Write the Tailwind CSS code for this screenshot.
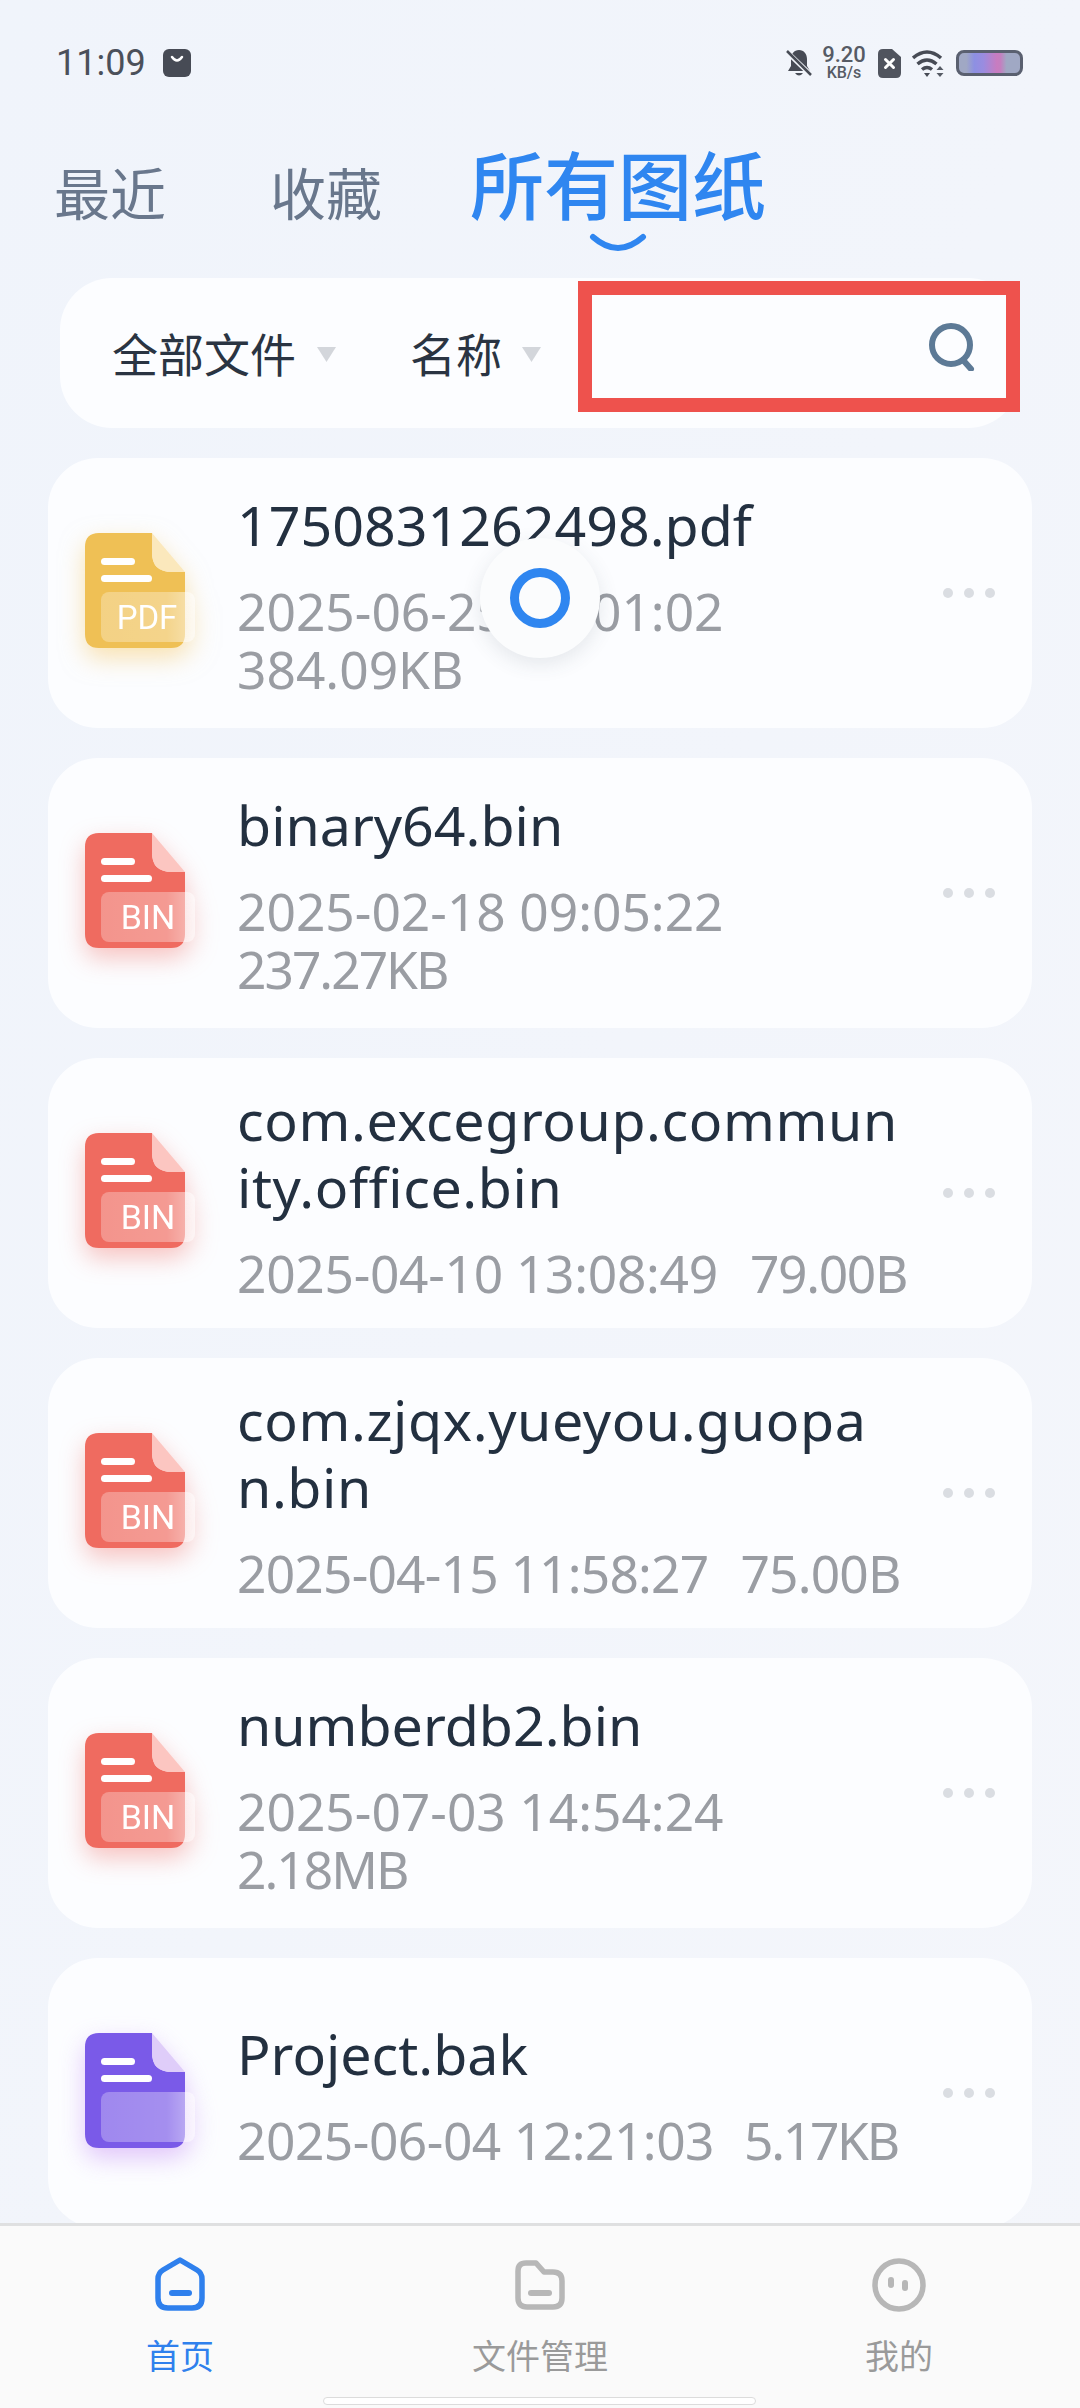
<!DOCTYPE html>
<html lang="zh-CN">
  <head>
    <meta charset="UTF-8" />
    <meta name="viewport" content="width=device-width, initial-scale=1.0" />
    <title>所有图纸</title>
    <script src="https://cdn.jsdelivr.net/npm/@tailwindcss/browser@4"></script>
  </head>
  <body>
    <div class="relative flex flex-col w-[1080px] h-[2408px] overflow-hidden bg-gradient-to-br from-[#f0f4fb] to-[#f4f6fb] font-['Noto_Sans','Noto_Sans_CJK_SC',sans-serif]">
      <!-- status bar -->
      <div class="flex items-center justify-between h-[126px] shrink-0 pl-[56px] pr-[57px]">
        <div class="flex items-center gap-[17px]">
          <span class="font-['Roboto'] text-[36px] leading-none text-[#4b505a]">11:09</span>
          <svg class="w-[28px] h-[28px]" viewBox="0 0 28 28">
            <rect width="28" height="28" rx="6" fill="#474b55" />
            <path d="M9 8q5 7 10 0" fill="none" stroke="#fff" stroke-width="2.5" stroke-linecap="round" />
          </svg>
        </div>
        <div class="flex items-center">
          <svg class="w-[26px] h-[28px]" viewBox="0 0 26 28">
            <path d="M13 1c5 0 8 4 8 9v7l3 5H2l3-5v-7c0-5 3-9 8-9zM9 24h8q-4 5-8 0z" fill="#474b55" />
            <path d="M1 3l24 23" stroke="#f2f5fb" stroke-width="5" />
            <path d="M1 2l24 24" stroke="#474b55" stroke-width="2.5" />
          </svg>
          <div class="flex flex-col items-center w-[46px] ml-[9px] mr-[11px] text-[#565b65] font-['Roboto'] font-medium">
            <span class="text-[22px] leading-[20px]">9.20</span>
            <span class="text-[16px] leading-[16px]">KB/s</span>
          </div>
          <svg class="w-[23px] h-[29px]" viewBox="0 0 23 29">
            <path d="M5 0h9l9 8v16q0 5-5 5H5q-5 0-5-5V5q0-5 5-5z" fill="#50545e" />
            <path d="M7.5 10.5l8 8M15.5 10.5l-8 8" stroke="#fff" stroke-width="3" stroke-linecap="round" />
          </svg>
          <svg class="w-[34px] h-[28px] ml-[11px]" viewBox="0 0 34 28">
            <path d="M1 9q14-12 28 0M5.500 15q9.500-8 19 0M10 20.500q5-4 10 0" fill="none" stroke="#474b55" stroke-width="3.500" />
            <path d="M12 24h6l-3 4z" fill="#474b55" />
            <path d="M28 17l3.500 4h-7zM28 28l3.500-4h-7z" fill="#565b65" />
          </svg>
          <div class="w-[67px] h-[26px] ml-[10px] rounded-[8px] border-[3px] border-[#5a6070] bg-[linear-gradient(90deg,#a0a8c4_0%,#a0a8c4_12%,#8d90e2_25%,#9a8ce0_40%,#c87cc0_62%,#c47fc0_68%,#a0a8c4_78%)]"></div>
        </div>
      </div>

      <!-- tabs -->
      <div class="flex items-start h-[152px] shrink-0 pl-[54px]">
        <span class="mt-[35px] w-[216px] text-[56px] leading-[64px] text-[#69778c]">最近</span>
        <span class="mt-[35px] w-[200px] text-[56px] leading-[64px] text-[#69778c]">收藏</span>
        <div class="flex flex-col items-center">
          <span class="mt-[18px] text-[74px] leading-[84px] font-medium text-[#2f86f0]">所有图纸</span>
          <svg class="w-[58px] h-[20px] mt-[5px]" viewBox="0 0 58 20">
            <path d="M4 4q25 22 50 0" fill="none" stroke="#2f86f0" stroke-width="6" stroke-linecap="round" />
          </svg>
        </div>
      </div>

      <!-- filter bar -->
      <div class="flex items-start h-[150px] shrink-0 ml-[60px] w-[960px] pl-[52px] rounded-[52px] bg-[#fcfdff]">
        <div class="flex items-center h-[110px] mt-[21px]">
          <span class="text-[46px] leading-none text-[#2a3442]">全部文件</span>
          <svg class="w-[19px] h-[15px] ml-[21px]" viewBox="0 0 19 15"><path d="M0 0h19l-9.500 15z" fill="#d3d6db" /></svg>
          <span class="ml-[74px] text-[46px] leading-none text-[#2a3442]">名称</span>
          <svg class="w-[19px] h-[15px] ml-[20px]" viewBox="0 0 19 15"><path d="M0 0h19l-9.500 15z" fill="#d3d6db" /></svg>
        </div>
        <div class="flex items-center justify-end ml-auto mt-[3px] w-[442px] h-[131px] pr-[30px] border-[14px] border-[#ee524d]">
          <svg class="w-[48px] h-[48px]" viewBox="0 0 48 48">
            <circle cx="23" cy="22" r="19" fill="none" stroke="#5d7a96" stroke-width="6" />
            <path d="M35 37l8 9" stroke="#5d7a96" stroke-width="6" stroke-linecap="round" />
          </svg>
        </div>
      </div>

      <!-- file list -->
      <main class="flex-1 min-h-0 overflow-hidden flex flex-col gap-[30px] pt-[30px] px-[48px]">
        <div class="flex items-center h-[270px] shrink-0 rounded-[50px] bg-[#fcfdff]">
          <svg class="w-[110px] h-[120px] ml-[37px] shrink-0 overflow-visible drop-shadow-[0_10px_12px_rgba(245,200,100,0.5)]" viewBox="0 0 110 120">
            <defs>
              <linearGradient id="glass" x1="0" x2="1" y1="0" y2="0">
                <stop offset="0" stop-color="#fff" stop-opacity="0.28" />
                <stop offset="0.7" stop-color="#fff" stop-opacity="0.32" />
                <stop offset="1" stop-color="#fff" stop-opacity="0.55" />
              </linearGradient>
            </defs>
            <path d="M14 0H67V20Q67 39 87 39H100V101Q100 115 86 115H14Q0 115 0 101V14Q0 0 14 0Z" fill="#efc055" />
            <path d="M67 0L100 39H87Q67 39 67 20Z" fill="#fbe8bc" />
            <rect x="16" y="25" width="34" height="7" rx="3.500" fill="#fff" />
            <rect x="16" y="42" width="51" height="7" rx="3.500" fill="#fff" />
            <rect x="16" y="59" width="94" height="50" rx="8" fill="url(#glass)" />
            <text x="62" y="96" text-anchor="middle" font-size="33" font-family="Roboto" fill="#fff">PDF</text>
          </svg>
          <div class="ml-[42px] pt-[2px] w-[663px]">
            <p class="text-[55.5px] leading-[67px] text-[#233040] break-all">1750831262498.pdf</p>
            <p class="mt-[24px] text-[51.5px] leading-[58px] text-[#9a9da3] whitespace-nowrap">2025-06-25 14:01:02<br />384.09KB</p>
          </div>
          <div class="flex gap-[11px] ml-auto mr-[37px]">
            <span class="w-[10px] h-[10px] rounded-full bg-[#dadde2]"></span>
            <span class="w-[10px] h-[10px] rounded-full bg-[#dadde2]"></span>
            <span class="w-[10px] h-[10px] rounded-full bg-[#dadde2]"></span>
          </div>
        </div>

        <div class="flex items-center h-[270px] shrink-0 rounded-[50px] bg-[#fcfdff]">
          <svg class="w-[110px] h-[120px] ml-[37px] shrink-0 overflow-visible drop-shadow-[0_10px_12px_rgba(240,110,100,0.4)]" viewBox="0 0 110 120">
            <path d="M14 0H67V20Q67 39 87 39H100V101Q100 115 86 115H14Q0 115 0 101V14Q0 0 14 0Z" fill="#ef6b60" />
            <path d="M67 0L100 39H87Q67 39 67 20Z" fill="#fcc6c1" />
            <rect x="16" y="25" width="34" height="7" rx="3.500" fill="#fff" />
            <rect x="16" y="42" width="51" height="7" rx="3.500" fill="#fff" />
            <rect x="16" y="59" width="94" height="50" rx="8" fill="url(#glass)" />
            <text x="63" y="96" text-anchor="middle" font-size="34" font-family="Roboto" fill="#fff">BIN</text>
          </svg>
          <div class="ml-[42px] pt-[2px] w-[663px]">
            <p class="text-[55.5px] leading-[67px] text-[#233040] break-all">binary64.bin</p>
            <p class="mt-[24px] text-[51.5px] leading-[58px] text-[#9a9da3] whitespace-nowrap">2025-02-18 09:05:22<br /><span class="tracking-[-2px]">237.27KB</span></p>
          </div>
          <div class="flex gap-[11px] ml-auto mr-[37px]">
            <span class="w-[10px] h-[10px] rounded-full bg-[#dadde2]"></span>
            <span class="w-[10px] h-[10px] rounded-full bg-[#dadde2]"></span>
            <span class="w-[10px] h-[10px] rounded-full bg-[#dadde2]"></span>
          </div>
        </div>

        <div class="flex items-center h-[270px] shrink-0 rounded-[50px] bg-[#fcfdff]">
          <svg class="w-[110px] h-[120px] ml-[37px] shrink-0 overflow-visible drop-shadow-[0_10px_12px_rgba(240,110,100,0.4)]" viewBox="0 0 110 120">
            <path d="M14 0H67V20Q67 39 87 39H100V101Q100 115 86 115H14Q0 115 0 101V14Q0 0 14 0Z" fill="#ef6b60" />
            <path d="M67 0L100 39H87Q67 39 67 20Z" fill="#fcc6c1" />
            <rect x="16" y="25" width="34" height="7" rx="3.500" fill="#fff" />
            <rect x="16" y="42" width="51" height="7" rx="3.500" fill="#fff" />
            <rect x="16" y="59" width="94" height="50" rx="8" fill="url(#glass)" />
            <text x="63" y="96" text-anchor="middle" font-size="34" font-family="Roboto" fill="#fff">BIN</text>
          </svg>
          <div class="ml-[42px] pt-[2px] w-[663px]">
            <p class="text-[55.5px] leading-[67px] text-[#233040] break-all tracking-[0.6px]">com.excegroup.community.office.bin</p>
            <p class="mt-[24px] text-[51.5px] leading-[58px] text-[#9a9da3] whitespace-nowrap"><span class="tracking-[-0.3px]">2025-04-10 13:08:49</span><span class="ml-[32px] tracking-[-1.3px]">79.00B</span></p>
          </div>
          <div class="flex gap-[11px] ml-auto mr-[37px]">
            <span class="w-[10px] h-[10px] rounded-full bg-[#dadde2]"></span>
            <span class="w-[10px] h-[10px] rounded-full bg-[#dadde2]"></span>
            <span class="w-[10px] h-[10px] rounded-full bg-[#dadde2]"></span>
          </div>
        </div>

        <div class="flex items-center h-[270px] shrink-0 rounded-[50px] bg-[#fcfdff]">
          <svg class="w-[110px] h-[120px] ml-[37px] shrink-0 overflow-visible drop-shadow-[0_10px_12px_rgba(240,110,100,0.4)]" viewBox="0 0 110 120">
            <path d="M14 0H67V20Q67 39 87 39H100V101Q100 115 86 115H14Q0 115 0 101V14Q0 0 14 0Z" fill="#ef6b60" />
            <path d="M67 0L100 39H87Q67 39 67 20Z" fill="#fcc6c1" />
            <rect x="16" y="25" width="34" height="7" rx="3.500" fill="#fff" />
            <rect x="16" y="42" width="51" height="7" rx="3.500" fill="#fff" />
            <rect x="16" y="59" width="94" height="50" rx="8" fill="url(#glass)" />
            <text x="63" y="96" text-anchor="middle" font-size="34" font-family="Roboto" fill="#fff">BIN</text>
          </svg>
          <div class="ml-[42px] pt-[2px] w-[663px]">
            <p class="text-[55.5px] leading-[67px] text-[#233040] break-all tracking-[0.6px]">com.zjqx.yueyou.guopan.bin</p>
            <p class="mt-[24px] text-[51.5px] leading-[58px] text-[#9a9da3] whitespace-nowrap"><span class="tracking-[-0.8px]">2025-04-15 11:58:27</span><span class="ml-[32px] tracking-[-0.8px]">75.00B</span></p>
          </div>
          <div class="flex gap-[11px] ml-auto mr-[37px]">
            <span class="w-[10px] h-[10px] rounded-full bg-[#dadde2]"></span>
            <span class="w-[10px] h-[10px] rounded-full bg-[#dadde2]"></span>
            <span class="w-[10px] h-[10px] rounded-full bg-[#dadde2]"></span>
          </div>
        </div>

        <div class="flex items-center h-[270px] shrink-0 rounded-[50px] bg-[#fcfdff]">
          <svg class="w-[110px] h-[120px] ml-[37px] shrink-0 overflow-visible drop-shadow-[0_10px_12px_rgba(240,110,100,0.4)]" viewBox="0 0 110 120">
            <path d="M14 0H67V20Q67 39 87 39H100V101Q100 115 86 115H14Q0 115 0 101V14Q0 0 14 0Z" fill="#ef6b60" />
            <path d="M67 0L100 39H87Q67 39 67 20Z" fill="#fcc6c1" />
            <rect x="16" y="25" width="34" height="7" rx="3.500" fill="#fff" />
            <rect x="16" y="42" width="51" height="7" rx="3.500" fill="#fff" />
            <rect x="16" y="59" width="94" height="50" rx="8" fill="url(#glass)" />
            <text x="63" y="96" text-anchor="middle" font-size="34" font-family="Roboto" fill="#fff">BIN</text>
          </svg>
          <div class="ml-[42px] pt-[2px] w-[663px]">
            <p class="text-[55.5px] leading-[67px] text-[#233040] break-all">numberdb2.bin</p>
            <p class="mt-[24px] text-[51.5px] leading-[58px] text-[#9a9da3] whitespace-nowrap">2025-07-03 14:54:24<br /><span class="tracking-[-2px]">2.18MB</span></p>
          </div>
          <div class="flex gap-[11px] ml-auto mr-[37px]">
            <span class="w-[10px] h-[10px] rounded-full bg-[#dadde2]"></span>
            <span class="w-[10px] h-[10px] rounded-full bg-[#dadde2]"></span>
            <span class="w-[10px] h-[10px] rounded-full bg-[#dadde2]"></span>
          </div>
        </div>

        <div class="flex items-center h-[270px] shrink-0 rounded-[50px] bg-[#fcfdff]">
          <svg class="w-[110px] h-[120px] ml-[37px] shrink-0 overflow-visible drop-shadow-[0_10px_12px_rgba(190,130,245,0.45)]" viewBox="0 0 110 120">
            <path d="M14 0H67V20Q67 39 87 39H100V101Q100 115 86 115H14Q0 115 0 101V14Q0 0 14 0Z" fill="#7a5ae8" />
            <path d="M67 0L100 39H87Q67 39 67 20Z" fill="#dfcdf9" />
            <rect x="16" y="25" width="34" height="7" rx="3.500" fill="#fff" />
            <rect x="16" y="42" width="51" height="7" rx="3.500" fill="#fff" />
            <rect x="16" y="59" width="94" height="50" rx="8" fill="url(#glass)" />
          </svg>
          <div class="ml-[42px] pt-[2px] w-[663px]">
            <p class="text-[55.5px] leading-[67px] text-[#233040] break-all">Project.bak</p>
            <p class="mt-[24px] text-[51.5px] leading-[58px] text-[#9a9da3] whitespace-nowrap"><span class="tracking-[-0.5px]">2025-06-04 12:21:03</span><span class="ml-[30px] tracking-[-2.3px]">5.17KB</span></p>
          </div>
          <div class="flex gap-[11px] ml-auto mr-[37px]">
            <span class="w-[10px] h-[10px] rounded-full bg-[#dadde2]"></span>
            <span class="w-[10px] h-[10px] rounded-full bg-[#dadde2]"></span>
            <span class="w-[10px] h-[10px] rounded-full bg-[#dadde2]"></span>
          </div>
        </div>
      </main>

      <!-- bottom nav -->
      <nav class="relative grid grid-cols-3 h-[185px] shrink-0 pt-[31px] border-t-[3px] border-[#dfe0e1] bg-[#fafafa]">
        <div class="flex flex-col items-center">
          <svg class="w-[52px] h-[54px]" viewBox="0 0 52 54">
            <path d="M26 3L43 13Q48 16 48 22V41Q48 51 38 51H14Q4 51 4 41V22Q4 16 9 13Z" fill="none" stroke="#2f80ed" stroke-width="5.500" stroke-linejoin="round" />
            <rect x="15" y="33" width="23" height="6" rx="3" fill="#2f80ed" />
          </svg>
          <span class="mt-[27px] text-[34px] leading-[36px] text-[#2f80ed]">首页</span>
        </div>
        <div class="flex flex-col items-center">
          <svg class="w-[52px] h-[54px]" viewBox="0 0 52 54">
            <path d="M12 6H22L30 15H39Q48 15 48 24V41Q48 50 39 50H13Q4 50 4 41V14Q4 6 12 6Z" fill="none" stroke="#b7b7b7" stroke-width="5.500" stroke-linejoin="round" />
            <rect x="14" y="33" width="24" height="6" rx="3" fill="#b7b7b7" />
          </svg>
          <span class="mt-[27px] text-[34px] leading-[36px] text-[#9a9a9a]">文件管理</span>
        </div>
        <div class="flex flex-col items-center pr-[2px]">
          <svg class="w-[54px] h-[54px] mt-[1px]" viewBox="0 0 54 54">
            <circle cx="27" cy="27" r="24" fill="none" stroke="#b7b7b7" stroke-width="5.500" />
            <rect x="16" y="19" width="6" height="11" rx="3" fill="#b7b7b7" />
            <rect x="30" y="22" width="6" height="11" rx="3" fill="#b7b7b7" />
          </svg>
          <span class="mt-[26px] text-[34px] leading-[36px] text-[#9a9a9a]">我的</span>
        </div>
        <div class="absolute left-[323px] bottom-[3px] w-[433px] h-[8px] rounded-full bg-white border border-[#dcdcdc]"></div>
      </nav>

      <!-- loading spinner over the list -->
      <div class="absolute left-[480px] top-[538px] flex items-center justify-center w-[120px] h-[120px] rounded-full bg-[#fbfcfd] shadow-[0_6px_20px_rgba(60,70,90,0.12)]">
        <div class="w-[60px] h-[60px] -mt-[1px] rounded-full border-[9px] border-[#2f86f0]"></div>
      </div>
    </div>
  </body>
</html>
